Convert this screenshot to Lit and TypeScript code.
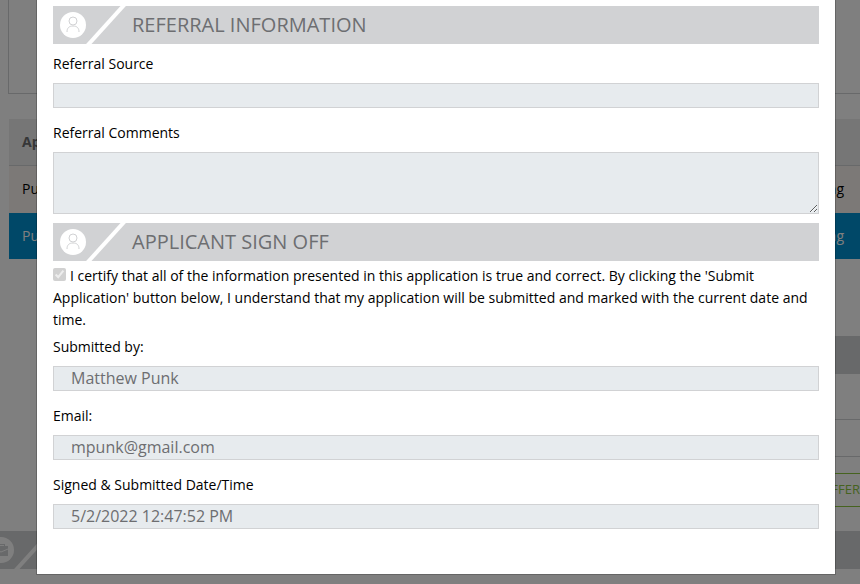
import { LitElement, html, css, svg } from "lit";
import { customElement, property } from "lit/decorators.js";

const person = svg`
  <circle cx="15" cy="10" r="4"></circle>
  <path d="M9 21c0-4 2-6 6-6s6 2 6 6"></path>`;

const briefcase = svg`
  <path class="solid" d="M8 10h3V8h8v2h3v10H8z"></path>
  <path class="flap" d="M8 13l7 3 7-3"></path>
  <path class="flap" d="M12 9.500h6"></path>`;

@customElement("section-bar")
class SectionBar extends LitElement {
  @property() heading = "";
  @property() icon = "person";

  static styles = css`
    :host { display: block; }
    .bar {
      display: flex;
      align-items: center;
      height: 38px;
      background: #d1d2d4;
      color: #6d6e71;
    }
    svg { flex: none; display: block; width: 79px; height: 38px; }
    .disc { fill: #fff; }
    .slash { stroke: #fff; stroke-width: 4; }
    .glyph { fill: none; stroke: #d1d2d4; stroke-width: 1; }
    .solid { fill: #d1d2d4; stroke: none; }
    .flap { stroke: #fff; }
    h2 { margin: 0; font: 400 20px/38px "Open Sans", sans-serif; white-space: nowrap; }
  `;

  render() {
    return html`<div class="bar">
      <svg viewBox="0 0 79 38" aria-hidden="true">
        <circle class="disc" cx="20" cy="19" r="13"></circle>
        <g class="glyph" transform="translate(5 5)">${this.icon === "person" ? person : briefcase}</g>
        <path class="slash" d="M34 40L72 -2"></path>
      </svg>
      <h2>${this.heading}</h2>
    </div>`;
  }
}

@customElement("app-root")
class AppRoot extends LitElement {
  static styles = css`
    :host {
      display: block;
      position: relative;
      min-height: 100vh;
      overflow: hidden;
      background: #fff;
      color: #000;
      font: 14px/22px "Open Sans", sans-serif;
    }
    * { box-sizing: border-box; }
    .page { margin: 0 -24px 0 0; }
    .panel { height: 94px; margin-left: 8px; border: 1px solid #d1d2d4; border-top: 0; }
    table { width: calc(100% - 9px); margin: 25px 0 77px 9px; border-collapse: separate; border-spacing: 0; }
    th, td { height: 47px; padding: 0 13px 1px; text-align: left; }
    th { background: #ececec; color: #6d6e71; border-bottom: 1px solid #d1d2d4; }
    td { background: #f8f3ee; }
    .selected td { background: #0090d0; color: #fff; height: 46px; padding-bottom: 0; }
    .end { padding-right: 40px; text-align: right; }
    .details { margin-left: 60px; }
    .line { height: 46px; border-bottom: 1px solid #d1d2d4; }
    .short { height: 37px; }
    .actions { display: flex; justify-content: flex-end; padding: 16px 10px 24px 0; }
    .offer {
      height: 34px;
      padding: 0 13px 2px;
      border: 1px solid #8cc63f;
      background: #fff;
      color: #8cc63f;
      font: 13px/22px "Open Sans", sans-serif;
    }
    .work { display: block; margin-left: -19px; }

    .overlay { position: absolute; inset: 0; background: rgba(0, 0, 0, 0.5); }
    .dialog {
      margin: 0 24px 0 36px;
      padding: 6px 16px 45px;
      border: 1px solid rgba(0, 0, 0, 0.2);
      border-top: 0;
      background: #fff;
      background-clip: padding-box;
    }
    .field { display: block; margin-top: 14px; }
    .field.first { margin-top: 9px; }
    .field.after { margin-top: 5px; }
    .caption { display: block; margin-bottom: 8px; }
    input.text, textarea {
      display: block;
      width: 100%;
      height: 25px;
      margin: 0;
      padding: 0 17px 2px;
      border: 1px solid #d1d2d4;
      border-radius: 0;
      background: #e7ebee;
      color: #6d6e71;
      font: 16px/22px "Open Sans", sans-serif;
    }
    textarea { height: 62px; resize: vertical; }
    .second { margin-top: 9px; }
    .certify { display: block; margin-top: 4px; }
    .certify input { width: 13px; height: 13px; margin: 0 4px 0 0; vertical-align: 0; }
  `;

  render() {
    return html`
      <div class="page" inert>
        <div class="panel"></div>
        <table>
          <thead><tr><th>App</th><th></th></tr></thead>
          <tbody>
            <tr><td>Punk</td><td class="end">Pending</td></tr>
            <tr class="selected"><td>Punk</td><td class="end">Pending</td></tr>
          </tbody>
        </table>
        <div class="details">
          <section-bar icon="briefcase"></section-bar>
          <div class="line"></div>
          <div class="line short"></div>
          <div class="actions"><button class="offer">OFFER</button></div>
        </div>
        <section-bar class="work" icon="briefcase"></section-bar>
      </div>
      <div class="overlay">
        <form class="dialog" role="dialog" aria-label="Application">
          <section-bar heading="REFERRAL INFORMATION"></section-bar>
          <label class="field first"><span class="caption">Referral Source</span>
            <input class="text" type="text" readonly></label>
          <label class="field"><span class="caption">Referral Comments</span>
            <textarea readonly></textarea></label>
          <section-bar class="second" heading="APPLICANT SIGN OFF"></section-bar>
          <label class="certify"><input type="checkbox" checked disabled>I certify that all of the information presented in this application is true and correct. By clicking the 'Submit Application' button below, I understand that my application will be submitted and marked with the current date and time.</label>
          <label class="field after"><span class="caption">Submitted by:</span>
            <input class="text" type="text" readonly value="Matthew Punk"></label>
          <label class="field"><span class="caption">Email:</span>
            <input class="text" type="text" readonly value="mpunk@gmail.com"></label>
          <label class="field"><span class="caption">Signed &amp; Submitted Date/Time</span>
            <input class="text" type="text" readonly value="5/2/2022 12:47:52 PM"></label>
        </form>
      </div>`;
  }
}
